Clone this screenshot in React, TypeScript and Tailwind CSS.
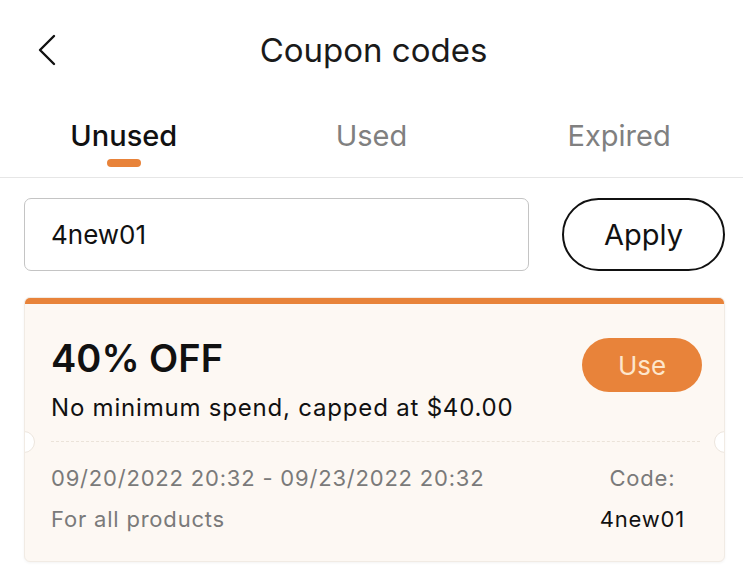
import * as React from 'react';

function BackIcon() {
  return (
    <svg width="22" height="32" viewBox="0 0 22 32" fill="none">
      <path d="M18 2 L4 16 L18 30" stroke="#111" strokeWidth="2.4" strokeLinecap="round" strokeLinejoin="round" />
    </svg>
  );
}

export default function App() {
  const tabs = ['Unused', 'Used', 'Expired'];
  return (
    <div className="h-[578px] w-[743px] overflow-hidden bg-white font-['Inter',sans-serif] text-[#111]">
      {/* header */}
      <div className="relative flex h-[100px] items-center justify-center">
        <div className="absolute left-[36px] top-[34px]">
          <BackIcon />
        </div>
        <h1 className="pl-[4px] text-[33px] leading-none text-[#1a1a1a]">Coupon codes</h1>
      </div>

      {/* tabs */}
      <div className="grid h-[78px] grid-cols-3 border-b border-[#e6e6e6]">
        {tabs.map((t, i) => (
          <div key={t} className="flex flex-col items-center pt-[16px]">
            <span className={i === 0 ? 'text-[29px] font-medium leading-[40px] text-[#111]' : 'text-[29px] leading-[40px] text-[#808080]'}>
              {t}
            </span>
            {i === 0 && <div className="mt-[3px] h-[8px] w-[34px] rounded-full bg-[#e8833a]" />}
          </div>
        ))}
      </div>

      {/* code input */}
      <div className="flex items-center gap-[33px] pl-[24px] pr-[18px] pt-[20px]">
        <div className="flex h-[73px] flex-1 items-center rounded-[7px] border border-[#c4c4c4] px-[26px] text-[26px]">
          4new01
        </div>
        <button className="flex h-[73px] w-[163px] items-center justify-center rounded-full border-2 border-[#111] text-[29px]">
          Apply
        </button>
      </div>

      {/* coupon card */}
      <div className="relative ml-[24px] mr-[18px] mt-[26px] overflow-hidden rounded-[6px] border border-[#f1ebe4] bg-[#fdf8f3] shadow-[0_1px_3px_rgba(0,0,0,0.05)]">
        <div className="h-[6px] bg-[#e8833a]" />
        <div className="flex items-start justify-between pl-[26px] pr-[22px] pt-[32px]">
          <div>
            <div className="text-[38px] font-semibold leading-[44px]">40% OFF</div>
            <div className="mt-[13px] text-[24px] leading-[30px] tracking-[0.8px]">No minimum spend, capped at $40.00</div>
          </div>
          <button className="mt-[2px] flex h-[54px] w-[120px] items-center justify-center rounded-full bg-[#e8833a] text-[26px] text-[#fde6cc]">
            Use
          </button>
        </div>
        <div className="relative mt-[9px] h-[20px]">
          <div className="absolute left-[26px] right-[24px] top-[9px] border-t border-dashed border-[#ebe3d9]" />
          <div className="absolute left-[-12px] top-[-1px] h-[22px] w-[22px] rounded-full border border-[#ece5dd] bg-white" />
          <div className="absolute right-[-12px] top-[-1px] h-[22px] w-[22px] rounded-full border border-[#ece5dd] bg-white" />
        </div>
        <div className="flex justify-between pb-[21px] pl-[26px] pr-[39px] pt-[6px] text-[22px] leading-[41px] tracking-[0.8px]">
          <div className="text-[#7a7a7a]">
            <div>09/20/2022 20:32 - 09/23/2022 20:32</div>
            <div>For all products</div>
          </div>
          <div className="flex flex-col items-center">
            <div className="text-[#7a7a7a]">Code:</div>
            <div className="text-[#111]">4new01</div>
          </div>
        </div>
      </div>
    </div>
  );
}
